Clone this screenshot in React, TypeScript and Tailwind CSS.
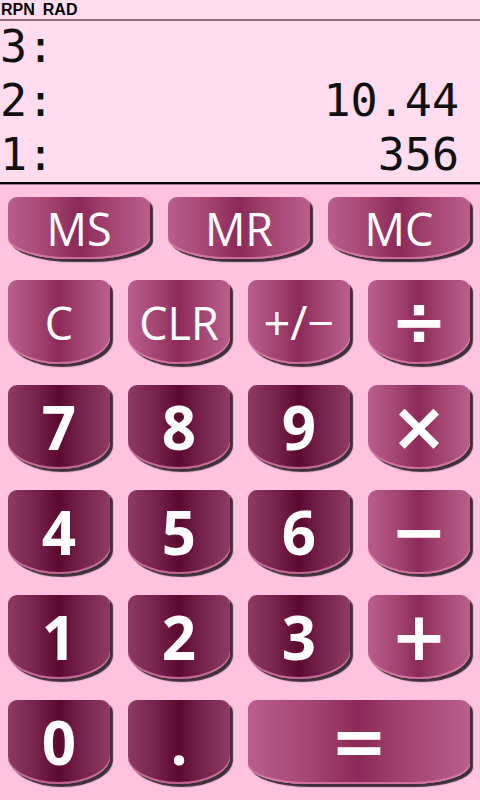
import React from 'react';

type Kind = 'fn' | 'num';

const fnBg = 'bg-[linear-gradient(to_right,#b95e8e_0%,#a2436f_30%,#8b2958_50%,#a2436f_70%,#b95e8e_100%)]';
const numBg = 'bg-[linear-gradient(to_right,#8e3b64_0%,#74204a_30%,#5c0930_50%,#74204a_70%,#8e3b64_100%)]';
const keyShadow = 'shadow-[inset_0_-2px_0_rgba(226,128,176,0.75),3px_3px_1px_rgba(52,40,46,0.95)]';

const Key: React.FC<{
  label: string;
  kind: Kind;
  tall?: boolean;
  wide?: boolean;
  op?: boolean;
  small?: boolean;
}> = ({ label, kind, tall = true, wide = false, op = false, small = false }) => {
  const shape = tall
    ? wide
      ? 'h-[84px] rounded-t-[9px] rounded-b-[60px_20px] col-span-2'
      : 'h-[84px] rounded-t-[9px] rounded-b-[51px_27px]'
    : 'h-[62px] rounded-t-[9px] rounded-b-[62px_21px]';
  const text = op
    ? "font-['DejaVu_Sans',sans-serif] text-[68px] font-bold"
    : kind === 'num'
      ? "font-['Open_Sans',sans-serif] text-[60px] font-bold"
      : small
        ? "font-['Open_Sans',sans-serif] text-[47px] font-normal"
        : "font-['Open_Sans',sans-serif] text-[45px] font-normal";
  return (
    <div
      className={`${shape} ${kind === 'fn' ? fnBg : numBg} ${keyShadow} flex items-center justify-center text-white leading-none select-none`}
    >
      <span className={text}>{label}</span>
    </div>
  );
};

const StackRow: React.FC<{ n: number; value: string; first?: boolean }> = ({ n, value, first }) => (
  <div className={`${first ? 'h-[53px] leading-[52px]' : 'h-[54px] leading-[54px]'} flex justify-between pr-[21px]`}>
    <span>{n}:</span>
    <span>{value}</span>
  </div>
);

export default function App() {
  return (
    <div className="w-[480px] h-[800px] bg-[#ffc2df] flex flex-col overflow-hidden">
      {/* stack display */}
      <div className="bg-[#ffdcee]">
        <div className="h-[19px] px-[1px] flex gap-[8px] leading-[19px] text-[16px] font-bold text-black font-['Liberation_Sans',sans-serif]">
          <span>RPN</span>
          <span>RAD</span>
        </div>
        <div className="h-[2px] bg-[#8d717b]" />
        <div className="font-['DejaVu_Sans_Mono',monospace] text-[45px] text-[#111]">
          <StackRow n={3} value="" first />
          <StackRow n={2} value="10.44" />
          <StackRow n={1} value="356" />
        </div>
        <div className="h-[2px] bg-black" />
      </div>
      <div className="h-[1px] bg-[#9a7f8a]" />

      {/* keypad */}
      <div className="pl-[8px] pr-[10px] pt-[12px] flex flex-col gap-[21px]">
        <div className="grid grid-cols-3 gap-x-[18px]">
          <Key label="MS" kind="fn" tall={false} />
          <Key label="MR" kind="fn" tall={false} />
          <Key label="MC" kind="fn" tall={false} />
        </div>
        <div className="grid grid-cols-4 gap-x-[18px] gap-y-[21px]">
          <Key label="C" kind="fn" />
          <Key label="CLR" kind="fn" />
          <Key label="+/−" kind="fn" small />
          <Key label="÷" kind="fn" op />

          <Key label="7" kind="num" />
          <Key label="8" kind="num" />
          <Key label="9" kind="num" />
          <Key label="×" kind="fn" op />

          <Key label="4" kind="num" />
          <Key label="5" kind="num" />
          <Key label="6" kind="num" />
          <Key label="−" kind="fn" op />

          <Key label="1" kind="num" />
          <Key label="2" kind="num" />
          <Key label="3" kind="num" />
          <Key label="+" kind="fn" op />

          <Key label="0" kind="num" />
          <Key label="." kind="num" />
          <Key label="=" kind="fn" wide op />
        </div>
      </div>
    </div>
  );
}
